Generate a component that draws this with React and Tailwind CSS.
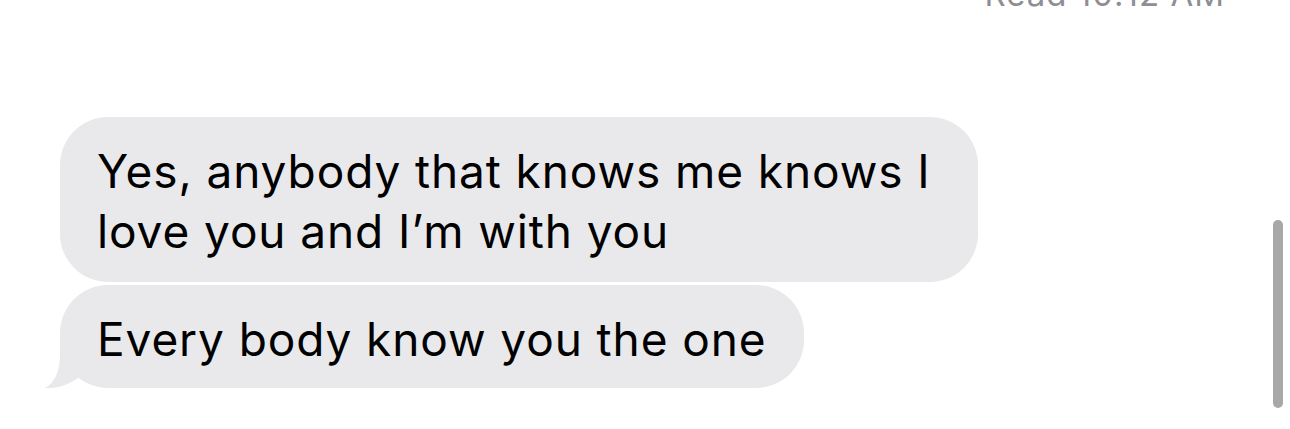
export default function App() {
  const font = { fontFamily: 'Inter, "Liberation Sans", Arial, sans-serif' };
  return (
    <div className="relative h-[429px] w-[1290px] overflow-hidden bg-white" style={font}>
      {/* delivery status, partly scrolled off the top */}
      <div className="mt-[-23px] flex justify-end pr-[65px]">
        <span className="text-[33px] leading-[34px] tracking-[1px] text-[#8e8e93]">Read 10:12 AM</span>
      </div>

      <div className="mt-[106px] flex flex-col items-start gap-[3px] pl-[60px]">
        <div className="w-[918px] rounded-[48px] bg-[#e9e9eb] pt-[24px] pb-[21px] pl-[37px] pr-[30px] text-[46px] leading-[60px] tracking-[0.9px] text-black">
          Yes, anybody that knows me knows I love you and I’m with you
        </div>
        <div className="relative rounded-[48px] bg-[#e9e9eb] pt-[24px] pb-[19px] pl-[37px] pr-[37px] text-[46px] leading-[60px] tracking-[0.9px] text-black">
          <svg
            className="absolute left-[-16px] bottom-[0px]"
            width="40"
            height="43"
            viewBox="0 0 40 43"
          >
            <path d="M16,0 L16,8 C16,25 12,37 1,43 C12,44 24,40 34,33 L34,0 Z" fill="#e9e9eb" />
          </svg>
          <span className="relative">Every body know you the one</span>
        </div>
      </div>

      {/* scroll indicator */}
      <div className="absolute right-[7px] top-[220px] h-[188px] w-[10px] rounded-full bg-[#a8a8a8]" />
    </div>
  );
}
